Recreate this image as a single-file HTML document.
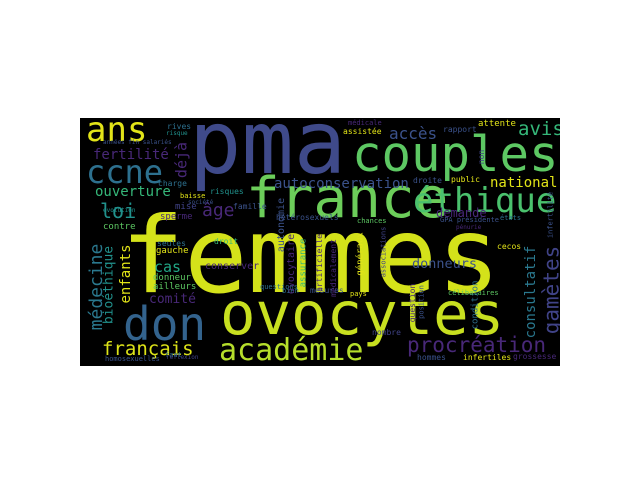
<!DOCTYPE html>
<html><head><meta charset="utf-8"><style>
html,body{margin:0;padding:0;background:#fff;width:640px;height:480px;overflow:hidden}
#c{position:absolute;left:80px;top:118px;width:480px;height:248px;background:#000;overflow:hidden}
#w{position:absolute;left:-80px;top:-118px;width:640px;height:480px}
#w span{position:absolute;white-space:nowrap;line-height:1;font-family:"DejaVu Sans Mono","Liberation Mono",monospace}
#w span.v{transform:translate(-50%,-50%) rotate(-90deg)}
</style></head><body>
<div id="c"><div id="w">
<span style="left:121px;top:204px;font-size:105px;color:#d4e21a">femmes</span>
<span style="left:189px;top:100px;font-size:87px;color:#3f4a8a">pma</span>
<span style="left:352px;top:130px;font-size:49px;color:#5dc863">couples</span>
<span style="left:86px;top:113px;font-size:34px;color:#e2e418">ans</span>
<span style="left:86px;top:156px;font-size:32px;color:#2d708e">ccne</span>
<span style="left:246px;top:171px;font-size:56px;color:#6ccd5a">france</span>
<span style="left:413px;top:184px;font-size:34px;color:#4ac16d">éthique</span>
<span style="left:220px;top:284px;font-size:59px;color:#c8e020">ovocytes</span>
<span style="left:123px;top:301px;font-size:46px;color:#33638d">don</span>
<span style="left:219px;top:336px;font-size:30px;color:#b5de2b">académie</span>
<span style="left:102px;top:340px;font-size:19px;color:#dde318">français</span>
<span style="left:407px;top:335px;font-size:21px;color:#482878">procréation</span>
<span style="left:274px;top:177px;font-size:14px;color:#3b528b">autoconservation</span>
<span style="left:389px;top:126px;font-size:16px;color:#3b528b">accès</span>
<span style="left:518px;top:120px;font-size:19px;color:#35b779">avis</span>
<span style="left:490px;top:176px;font-size:14px;color:#e2e418">national</span>
<span style="left:436px;top:207px;font-size:12px;color:#482878">demande</span>
<span style="left:93px;top:148px;font-size:14px;color:#482878">fertilité</span>
<span style="left:95px;top:185px;font-size:14px;color:#35b779">ouverture</span>
<span style="left:100px;top:201px;font-size:20px;color:#21918c">loi</span>
<span style="left:202px;top:202px;font-size:18px;color:#482878">âge</span>
<span style="left:149px;top:293px;font-size:13px;color:#482878">comité</span>
<span style="left:154px;top:260px;font-size:15px;color:#21a685">cas</span>
<span style="left:412px;top:258px;font-size:13.5px;color:#3b528b">donneurs</span>
<span class="v" style="left:552px;top:290px;font-size:21px;color:#404387">gamètes</span>
<span class="v" style="left:531px;top:292px;font-size:14px;color:#2a788e">consultatif</span>
<span class="v" style="left:97px;top:287px;font-size:18px;color:#2a788e">médecine</span>
<span class="v" style="left:109px;top:285px;font-size:13px;color:#21918c">bioéthique</span>
<span class="v" style="left:126px;top:274px;font-size:14px;color:#e2e418">enfants</span>
<span class="v" style="left:182px;top:160px;font-size:15px;color:#482878">déjà</span>
<span style="left:153px;top:274px;font-size:9px;color:#5dc863">donneur</span>
<span style="left:153px;top:283px;font-size:9px;color:#5dc863">ailleurs</span>
<span style="left:156px;top:247px;font-size:9px;color:#e2e418">gauche</span>
<span style="left:157px;top:240px;font-size:8px;color:#2d708e">seules</span>
<span style="left:205px;top:262px;font-size:10px;color:#482878">conserver</span>
<span style="left:214px;top:238px;font-size:8px;color:#35b779">droit</span>
<span style="left:103px;top:223px;font-size:9px;color:#5dc863">contre</span>
<span style="left:160px;top:213px;font-size:9px;color:#482878">sperme</span>
<span style="left:175px;top:203px;font-size:9px;color:#404387">mise</span>
<span style="left:158px;top:180px;font-size:8px;color:#2d708e">charge</span>
<span style="left:210px;top:188px;font-size:8px;color:#21918c">risques</span>
<span style="left:233px;top:203px;font-size:8px;color:#3b528b">famille</span>
<span style="left:276px;top:214px;font-size:8px;color:#3b528b">hétérosexuels</span>
<span style="left:167px;top:123px;font-size:8px;color:#2d708e">rives</span>
<span style="left:166px;top:131px;font-size:6px;color:#21918c">risque</span>
<span style="left:103px;top:140px;font-size:6px;color:#3b528b">années fin salariés</span>
<span style="left:103px;top:208px;font-size:6px;color:#21918c">évolution</span>
<span style="left:180px;top:193px;font-size:7px;color:#e2e418">baisse</span>
<span style="left:188px;top:200px;font-size:6px;color:#3b528b">société</span>
<span style="left:343px;top:128px;font-size:8px;color:#e2e418">assistée</span>
<span style="left:348px;top:120px;font-size:7px;color:#482878">médicale</span>
<span style="left:443px;top:126px;font-size:8px;color:#3b528b">rapport</span>
<span style="left:478px;top:120px;font-size:9px;color:#e2e418">attente</span>
<span style="left:413px;top:177px;font-size:8px;color:#3b528b">droite</span>
<span style="left:451px;top:176px;font-size:8px;color:#e2e418">public</span>
<span style="left:440px;top:217px;font-size:7px;color:#3b528b">GPA présidente</span>
<span style="left:500px;top:215px;font-size:7px;color:#2d708e">états</span>
<span style="left:357px;top:218px;font-size:7px;color:#5dc863">chances</span>
<span style="left:456px;top:225px;font-size:6px;color:#482878">pénurie</span>
<span style="left:260px;top:284px;font-size:7px;color:#2d708e">questions</span>
<span style="left:282px;top:288px;font-size:7px;color:#2d708e">bien</span>
<span style="left:310px;top:287px;font-size:8px;color:#3b528b">mesures</span>
<span style="left:350px;top:291px;font-size:7px;color:#e2e418">pays</span>
<span style="left:372px;top:329px;font-size:8px;color:#404387">nombre</span>
<span style="left:417px;top:354px;font-size:8px;color:#3b528b">hommes</span>
<span style="left:463px;top:354px;font-size:8px;color:#e2e418">infertiles</span>
<span style="left:448px;top:290px;font-size:7px;color:#5dc863">célibataires</span>
<span style="left:497px;top:243px;font-size:8px;color:#e2e418">cecos</span>
<span style="left:513px;top:353px;font-size:8px;color:#482878">grossesse</span>
<span style="left:165px;top:352px;font-size:7px;color:#2d708e">faut</span>
<span style="left:105px;top:356px;font-size:7px;color:#3b528b">homosexuelles</span>
<span style="left:166px;top:355px;font-size:6px;color:#404387">réflexion</span>
<span class="v" style="left:413px;top:303px;font-size:8px;color:#482878">question</span>
<span class="v" style="left:422px;top:302px;font-size:7px;color:#3b528b">position</span>
<span class="v" style="left:292px;top:264px;font-size:10px;color:#482878">ovocytaire</span>
<span class="v" style="left:282px;top:225px;font-size:10px;color:#3b528b">autonomie</span>
<span class="v" style="left:304px;top:263px;font-size:9px;color:#35b779">assurance</span>
<span class="v" style="left:320px;top:263px;font-size:8px;color:#482878">artificielle</span>
<span class="v" style="left:334px;top:268px;font-size:8px;color:#482878">médicalement</span>
<span class="v" style="left:361px;top:254px;font-size:9px;color:#e2e418">généraux</span>
<span class="v" style="left:384px;top:252px;font-size:7px;color:#404387">associations</span>
<span class="v" style="left:476px;top:305px;font-size:9px;color:#2d708e">condition</span>
<span class="v" style="left:482px;top:157px;font-size:8px;color:#404387">non</span>
<span class="v" style="left:551px;top:215px;font-size:7px;color:#3b528b">infertilité</span>
</div></div>
</body></html>
